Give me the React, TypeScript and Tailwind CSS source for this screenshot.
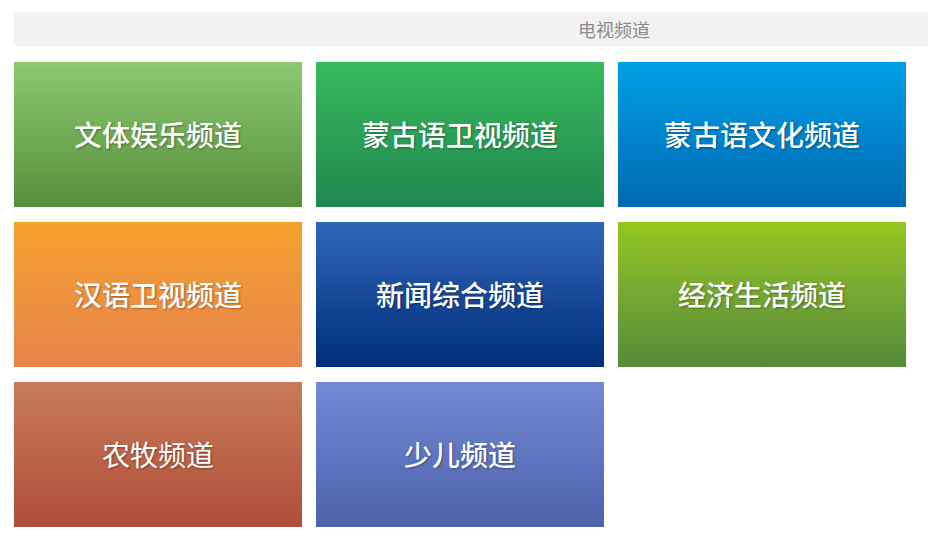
import React from "react";

const tiles = [
  { name: "文体娱乐频道", cls: "bg-gradient-to-b from-[#8cc970] to-[#568f3b]", bold: true },
  { name: "蒙古语卫视频道", cls: "bg-gradient-to-b from-[#37ba5c] to-[#1f884f]", bold: true },
  { name: "蒙古语文化频道", cls: "bg-gradient-to-b from-[#00a0e6] to-[#0069b2]", bold: true },
  { name: "汉语卫视频道", cls: "bg-gradient-to-b from-[#f4a12a] to-[#e8834b]", bold: true },
  { name: "新闻综合频道", cls: "bg-gradient-to-b from-[#3066ba] to-[#002e7b]", bold: true },
  { name: "经济生活频道", cls: "bg-gradient-to-b from-[#95c71e] to-[#558a37]", bold: true },
  { name: "农牧频道", cls: "bg-gradient-to-b from-[#c77a58] to-[#af4e3b]", bold: false },
  { name: "少儿频道", cls: "bg-gradient-to-b from-[#7289d4] to-[#4c62ab]", bold: true },
];

export default function App() {
  return (
    <div className="w-[928px] h-[533px] overflow-hidden bg-white font-['Noto_Sans_CJK_SC',sans-serif]">
      <div className="pl-[14px] pt-[12px]">
        <div className="w-[1200px] h-[34px] bg-[#f2f2f2] flex items-center justify-center text-[18px] text-[#8a8a8a] tracking-[0px]">
          电视频道
        </div>
        <div className="grid grid-cols-[288px_288px_288px] gap-x-[14px] gap-y-[15px] mt-[16px]">
          {tiles.map((t) => (
            <div
              key={t.name}
              className={`h-[145px] flex items-center justify-center text-white text-[28px] leading-none [text-shadow:1px_1px_2px_rgba(0,0,0,0.35)] ${t.cls} ${t.bold ? "font-medium" : "font-normal"}`}
            >
              <span className="pb-[1px]">{t.name}</span>
            </div>
          ))}
        </div>
      </div>
    </div>
  );
}
